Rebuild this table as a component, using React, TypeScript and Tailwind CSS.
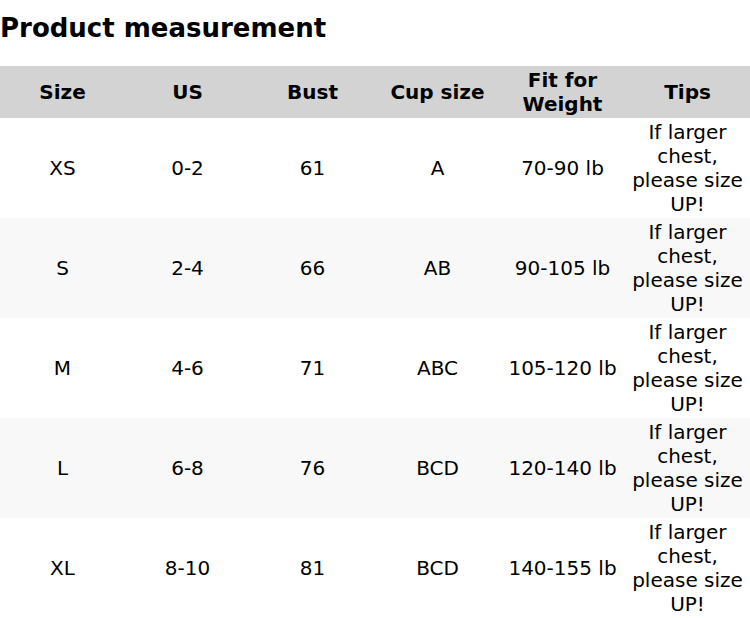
const rows = [
  { size: 'XS', us: '0-2', bust: '61', cup: 'A', weight: '70-90 lb' },
  { size: 'S', us: '2-4', bust: '66', cup: 'AB', weight: '90-105 lb' },
  { size: 'M', us: '4-6', bust: '71', cup: 'ABC', weight: '105-120 lb' },
  { size: 'L', us: '6-8', bust: '76', cup: 'BCD', weight: '120-140 lb' },
  { size: 'XL', us: '8-10', bust: '81', cup: 'BCD', weight: '140-155 lb' },
]

const headers = ['Size', 'US', 'Bust', 'Cup size', 'Fit for Weight', 'Tips']

export default function App() {
  return (
    <div className="w-[750px] bg-white text-black font-['DejaVu_Sans',sans-serif]">
      <h2 className="mt-[13px] mb-[23px] text-[26px] leading-[30px] font-bold">Product measurement</h2>
      <table className="w-full table-fixed border-collapse text-[20px] leading-[24px]">
        <thead>
          <tr className="bg-[#d3d3d3]">
            {headers.map((h) => (
              <th key={h} className="px-1 py-[2px] text-center font-bold">
                {h}
              </th>
            ))}
          </tr>
        </thead>
        <tbody>
          {rows.map((r, i) => (
            <tr key={r.size} className={i % 2 === 1 ? 'bg-[#f8f8f8]' : 'bg-white'}>
              <td className="px-1 py-[2px] text-center">{r.size}</td>
              <td className="px-1 py-[2px] text-center">{r.us}</td>
              <td className="px-1 py-[2px] text-center">{r.bust}</td>
              <td className="px-1 py-[2px] text-center">{r.cup}</td>
              <td className="px-1 py-[2px] text-center">{r.weight}</td>
              <td className="px-1 py-[2px] text-center">If larger chest, please size UP!</td>
            </tr>
          ))}
        </tbody>
      </table>
    </div>
  )
}
